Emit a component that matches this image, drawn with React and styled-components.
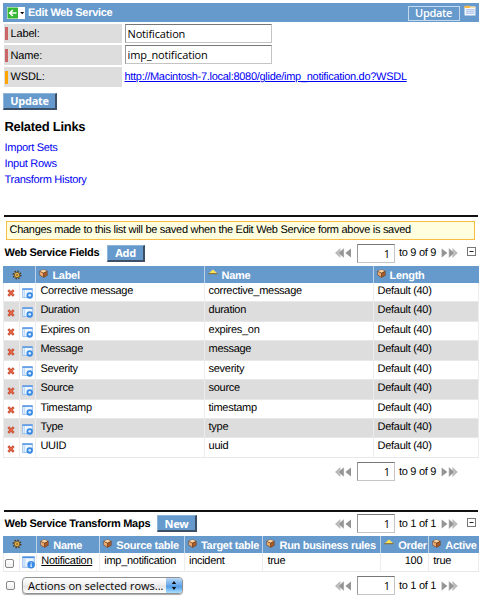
import React from 'react';
import styled, { createGlobalStyle } from 'styled-components';

const Global = createGlobalStyle`
  * { box-sizing: border-box; }
  body {
    margin: 0;
    background: #fff;
    color: #000;
    font: 11px/14px "Liberation Sans", Arial, sans-serif;
    letter-spacing: -0.29px;
    text-rendering: geometricPrecision;
  }
  #root { width: 483px; height: 599px; overflow: hidden; }
  svg { display: block; flex: none; }
`;

const lucida = '"Open Sans", "Noto Sans", sans-serif';

const Page = styled.main`
  width: 483px;
  height: 599px;
  padding: 3px 4px 0 3px;
  overflow: hidden;
  white-space: nowrap;
`;
const TitleBar = styled.header`
  display: flex;
  align-items: center;
  height: 19px;
  padding: 0 3.5px 0 4px;
  background: #6699cc;
  color: #fff;
`;
const Title = styled.h1`
  flex: 1;
  margin: 0 0 0 3px;
  padding-top: 1px;
  font-size: 11px;
`;
const BarButton = styled.button`
  width: 52px;
  height: 15px;
  margin: 1px 4px 0 0;
  padding: 0;
  border: 1px solid #c5d9ed;
  background: #6699cc;
  color: #fff;
  font: 600 11px/12px ${lucida};
  letter-spacing: -0.35px;
`;
const BarIcon = styled.span`
  align-self: flex-start;
  margin-top: 2px;
`;
const Form = styled.div`
  display: grid;
  grid-template-columns: 118px 1fr;
  grid-template-rows: repeat(3, 19.8px);
  gap: 2px 2.5px;
  margin: 1.5px 0 0 1px;
`;
const FieldLabel = styled.label`
  display: flex;
  align-items: center;
  gap: 3px;
  padding: 1px 0 0 1px;
  background: #ddd;
  letter-spacing: -0.15px;
  &::before { content: ""; width: 2.5px; height: 13px; background: ${p => p.$mark}; }
`;
const Field = styled.input`
  width: 147px;
  height: 19px;
  padding: 0 2px;
  border: 1px solid #c4c4c4;
  border-top: 1.5px solid #777;
  border-left-color: #999;
  border-radius: 0;
  background: #fff;
  color: #000;
  outline: 0;
  font: 11px/15px ${lucida};
  letter-spacing: -0.15px;
`;
const Url = styled.a`
  align-self: center;
  padding-top: 1px;
  color: #0000f4;
  text-decoration: underline;
`;
const Button = styled.button`
  width: ${p => p.$w}px;
  height: 17px;
  padding: 0;
  border: 1px solid #8db5dc;
  border-right: 2px solid #3d4f66;
  border-bottom: 2px solid #3d4f66;
  background: #6699cc;
  color: #fff;
  font: 700 11px/13px ${lucida};
  letter-spacing: -0.3px;
`;
const FormActions = styled.div`
  display: flex;
  height: 30.1px;
  padding-top: 6.1px;
`;
const Heading = styled.h2`
  height: 18.5px;
  margin: 0 0 0 1.5px;
  font-size: 13px;
  line-height: 19px;
`;
const Links = styled.nav`
  display: flex;
  flex-direction: column;
  height: 80px;
  padding: 4.5px 0 0 1.5px;
`;
const LinkItem = styled.a`
  height: 16px;
  line-height: 16px;
  color: #0000f4;
`;
const Rule = styled.hr`
  height: 2px;
  margin: 0 1px;
  border: 0;
  background: #111;
`;
const Notice = styled.div`
  height: 19px;
  margin: 3.5px 4px 0 3px;
  padding-left: 2.5px;
  border: 1.5px solid #f9bd43;
  background: #ffffdf;
  line-height: 17px;
`;
const SectionHead = styled.div`
  display: flex;
  align-items: center;
  height: ${p => p.$h}px;
  padding: 0 3px 0 1.5px;
`;
const SectionTitle = styled.h3`
  width: ${p => p.$w}px;
  margin: 0;
  font-size: 11px;
`;
const PagerBox = styled.div`
  display: flex;
  align-items: center;
  width: 123px;
  margin-left: auto;
  margin-right: ${p => p.$end}px;
`;
const PageInput = styled.input`
  width: 38px;
  height: 19px;
  margin: 0 4px 0 5px;
  padding: 0 4px 0 3px;
  border: 1px solid #c4c4c4;
  border-top: 1.5px solid #777;
  border-left-color: #999;
  border-radius: 0;
  text-align: right;
  font: 11px/15px ${lucida};
`;
const PageText = styled.span`
  width: 42px;
`;
const Collapse = styled.div`
  display: flex;
  align-self: flex-start;
  margin-top: ${p => p.$top}px;
`;
const Row = styled.div`
  display: grid;
  grid-template-columns: ${p => p.$cols};
  height: ${p => p.$h}px;
  background: ${p => (p.$shade ? '#ddd' : '#fff')};
`;
const HeadRow = styled(Row)`
  background: #6699cc;
  color: #fff;
  font-weight: 700;
`;
const HeadCell = styled.div`
  display: flex;
  align-items: flex-start;
  gap: 4px;
  padding: 3px 0 0 3px;
  border-left: 1px solid #bdd3ea;
`;
const GearCell = styled(HeadCell)`
  padding: 3.5px 0 0 8px;
  border-left-color: #6699cc;
`;
const HeadText = styled.span`
  line-height: 14px;
`;
const Cell = styled.div`
  padding: 1px ${p => (p.$right ? 6 : 0)}px 0 4px;
  border-left: 1px solid #ededed;
  border-bottom: 1px solid #e8e8e8;
  text-align: ${p => (p.$right ? 'right' : 'left')};
  line-height: 14px;
  &:last-child { border-right: 1px solid #ededed; }
`;
const IconCell = styled(Cell)`
  display: flex;
  align-items: flex-start;
  padding: ${p => p.$top}px 0 0 ${p => p.$left}px;
`;
const RecordLink = styled.a`
  text-decoration: underline;
`;
const ListFoot = styled.div`
  display: flex;
  align-items: center;
  height: ${p => p.$h}px;
  padding-left: 3px;
`;
const Check = styled.input`
  appearance: none;
  flex: none;
  width: 9px;
  height: 9px;
  margin: 0;
  border: 1px solid #888;
  border-radius: 2px;
  background: linear-gradient(#fff, #eee);
`;
const Picker = styled.button`
  display: flex;
  justify-content: space-between;
  align-items: stretch;
  width: 161px;
  height: 17px;
  margin-left: 7px;
  padding: 0 0 0 5px;
  border: 1px solid #909090;
  border-radius: 4px;
  overflow: hidden;
  background: linear-gradient(#fff, #eee 48%, #e2e2e2 52%, #fff);
  box-shadow: 0 1px 1px #aaa;
  font: 11px/15px ${lucida};
  letter-spacing: 0;
  color: #000;
`;
const Stepper = styled.span`
  display: flex;
  align-items: center;
  justify-content: center;
  width: 16px;
  background: linear-gradient(#b9d8f8, #65a6ea 50%, #4b96e6 52%, #a8e0ff);
`;

const BackIcon = () => (
  <svg width="18" height="12" viewBox="0 0 18 12">
    <rect width="18" height="12" fill="#fff" />
    <rect x=".5" y=".5" width="10.5" height="11" fill="#35b735" />
    <path d="M9.5 6H3M5.8 3L2.8 6l3 3" fill="none" stroke="#fff" strokeWidth="1.7" />
    <path d="M13.2 5h4l-2 2.2z" fill="#000" />
  </svg>
);
const TabIcon = () => (
  <svg width="12" height="11" viewBox="0 0 12 11">
    <rect x=".5" y="1.5" width="11" height="9" rx=".5" fill="#f4f8ff" />
    <path d="M.5 3V.8h5.8V3z" fill="#ffbb43" />
    <path d="M6.5 2.2h5" stroke="#ffd37d" />
    <rect x="2" y="4" width="8.5" height="5" fill="#b9cdee" />
    <path d="M2 5.5h8M2 7.5h8" stroke="#dce7fa" strokeWidth=".7" />
  </svg>
);
const GearIcon = () => (
  <svg width="10" height="10" viewBox="0 0 10 10">
    <circle cx="5" cy="5" r="3.8" fill="none" stroke="#4c3b20" strokeWidth="1.4" strokeDasharray="1.5 1.48" />
    <circle cx="5" cy="5" r="2.7" fill="#e5b44a" stroke="#72521e" strokeWidth=".9" />
    <circle cx="5" cy="5" r="1" fill="#8a6a33" />
  </svg>
);
const CubeIcon = () => (
  <svg width="9" height="9" viewBox="0 0 9 9">
    <path d="M.5 2L4.6.4 8.5 2v4.4L4.5 8.7.6 6.3z" fill="#6e3a18" />
    <path d="M.9 2.1L4.6.8l3.3 1.3-3.5 1.6z" fill="#ffd5a2" />
    <path d="M.9 2.7l3.3 1.6v3.6L1 6z" fill="#e8a870" />
    <path d="M4.9 4.3L8 2.8v3.4L4.9 8z" fill="#a65b2b" />
  </svg>
);
const SortIcon = () => (
  <svg width="10" height="6" viewBox="0 0 10 6">
    <path d="M.6 4.4L5 .4l4.4 4z" fill="#ffe45a" />
    <path d="M.3 4.7h9.4" stroke="#8b6b29" />
  </svg>
);
const DeleteIcon = () => (
  <svg width="8" height="8" viewBox="0 0 8 8">
    <path d="M1.3 1.2l5.4 5.6M6.7 1.2L1.3 6.8" stroke="#b9462c" strokeWidth="2.5" />
    <path d="M1.5 1.4l5 5.2M6.5 1.4l-5 5.2" stroke="#e66849" strokeWidth="1.4" />
  </svg>
);
const DetailIcon = ({ size = 11, info }) => (
  <svg width={size} height={size} viewBox="0 0 10 10">
    <path d="M.6.8h8.8v6H7v1.8H.6z" fill="#eef6ff" stroke="#8db9ed" strokeWidth=".8" />
    <path d="M.3 1h9.4" stroke="#4d91e4" strokeWidth="1.3" />
    <path d="M2.2 2v6" stroke="#b4d3f5" strokeWidth=".8" />
    <circle cx="7" cy="6.8" r="2.9" fill="#398ae4" />
    {info
      ? <path d="M7 5v.8M7 6.3v2.2" stroke="#fff" strokeWidth=".9" />
      : <circle cx="7" cy="6.7" r="1.2" fill="#d5eaff" />}
  </svg>
);
const PrevIcons = () => (
  <svg width="17" height="10" viewBox="0 0 17 10">
    <path d="M5.4 0v10L0 5z" fill="#b9b9b9" />
    <path d="M9 0v10L3.2 5z" fill="#949494" stroke="#eee" strokeWidth=".5" />
    <path d="M16 .5v9L10.4 5z" fill="#949494" />
  </svg>
);
const NextIcons = () => (
  <svg width="17" height="10" viewBox="0 0 17 10">
    <path d="M.6.5v9L6.4 5z" fill="#949494" />
    <path d="M11.4 0v10L16.8 5z" fill="#b9b9b9" />
    <path d="M7.8 0v10l5.8-5z" fill="#949494" stroke="#eee" strokeWidth=".5" />
  </svg>
);
const CollapseIcon = () => (
  <svg width="9" height="9" viewBox="0 0 9 9">
    <rect x=".5" y=".5" width="8" height="8" fill="#fff" stroke="#777" />
    <path d="M2.5 4.5h4" stroke="#222" />
  </svg>
);
const StepIcon = () => (
  <svg width="6" height="11" viewBox="0 0 6 11">
    <path d="M.8 4L3 1l2.2 3zM.8 7L3 10l2.2-3z" fill="#111" />
  </svg>
);

const Pager = ({ total, end }) => (
  <PagerBox $end={end}>
    <PrevIcons />
    <PageInput readOnly value="1" />
    <PageText>{`to ${total} of ${total}`}</PageText>
    <NextIcons />
  </PagerBox>
);

const fieldCols = '16px 16.4px 168.2px 169px 106.4px';
const mapCols = '16px 17.3px 63px 84.7px 78.5px 117.8px 48px 50.7px';
const fields = [
  ['Corrective message', 'corrective_message'],
  ['Duration', 'duration'],
  ['Expires on', 'expires_on'],
  ['Message', 'message'],
  ['Severity', 'severity'],
  ['Source', 'source'],
  ['Timestamp', 'timestamp'],
  ['Type', 'type'],
  ['UUID', 'uuid'],
];

export default function App() {
  return (
    <Page>
      <Global />
      <TitleBar>
        <BackIcon />
        <Title>Edit Web Service</Title>
        <BarButton>Update</BarButton>
        <BarIcon><TabIcon /></BarIcon>
      </TitleBar>
      <Form>
        <FieldLabel $mark="#cc6666">Label:</FieldLabel>
        <Field readOnly value="Notification" />
        <FieldLabel $mark="#cc6666">Name:</FieldLabel>
        <Field readOnly value="imp_notification" />
        <FieldLabel $mark="#ffa500">WSDL:</FieldLabel>
        <Url>http://Macintosh-7.local:8080/glide/imp_notification.do?WSDL</Url>
      </Form>
      <FormActions><Button $w={54}>Update</Button></FormActions>
      <Heading>Related Links</Heading>
      <Links>
        <LinkItem>Import Sets</LinkItem>
        <LinkItem>Input Rows</LinkItem>
        <LinkItem>Transform History</LinkItem>
      </Links>
      <Rule />
      <Notice>Changes made to this list will be saved when the Edit Web Service form above is saved</Notice>
      <SectionHead $h={26.4}>
        <SectionTitle $w={102.5}>Web Service Fields</SectionTitle>
        <Button $w={38}>Add</Button>
        <Pager total={9} end={9} />
        <Collapse $top={7}><CollapseIcon /></Collapse>
      </SectionHead>
      <HeadRow $cols="32.4px 168.2px 169px 106.4px" $h={16.6}>
        <GearCell><GearIcon /></GearCell>
        <HeadCell><CubeIcon /><HeadText>Label</HeadText></HeadCell>
        <HeadCell><SortIcon /><HeadText>Name</HeadText></HeadCell>
        <HeadCell><CubeIcon /><HeadText>Length</HeadText></HeadCell>
      </HeadRow>
      {fields.map(([label, name], i) => (
        <Row key={name} $cols={fieldCols} $h={19.45} $shade={i % 2 === 1}>
          <IconCell $top={6.5} $left={3}><DeleteIcon /></IconCell>
          <IconCell $top={5} $left={2}><DetailIcon /></IconCell>
          <Cell>{label}</Cell>
          <Cell>{name}</Cell>
          <Cell>Default (40)</Cell>
        </Row>
      ))}
      <ListFoot $h={28}><Pager total={9} end={21} /></ListFoot>
      <SectionHead $h={24} />
      <Rule />
      <SectionHead $h={24}>
        <SectionTitle $w={152.5}>Web Service Transform Maps</SectionTitle>
        <Button $w={40}>New</Button>
        <Pager total={1} end={9} />
        <Collapse $top={6}><CollapseIcon /></Collapse>
      </SectionHead>
      <HeadRow $cols="33.3px 63px 84.7px 78.5px 117.8px 48px 50.7px" $h={16.6}>
        <GearCell><GearIcon /></GearCell>
        <HeadCell><CubeIcon /><HeadText>Name</HeadText></HeadCell>
        <HeadCell><CubeIcon /><HeadText>Source table</HeadText></HeadCell>
        <HeadCell><CubeIcon /><HeadText>Target table</HeadText></HeadCell>
        <HeadCell><CubeIcon /><HeadText>Run business rules</HeadText></HeadCell>
        <HeadCell><SortIcon /><HeadText>Order</HeadText></HeadCell>
        <HeadCell><CubeIcon /><HeadText>Active</HeadText></HeadCell>
      </HeadRow>
      <Row $cols={mapCols} $h={19.7}>
        <IconCell $top={6} $left={1}><Check type="checkbox" /></IconCell>
        <IconCell $top={3} $left={2}><DetailIcon size={13} info /></IconCell>
        <Cell><RecordLink>Notification</RecordLink></Cell>
        <Cell>imp_notification</Cell>
        <Cell>incident</Cell>
        <Cell>true</Cell>
        <Cell $right>100</Cell>
        <Cell>true</Cell>
      </Row>
      <ListFoot $h={27}>
        <Check type="checkbox" />
        <Picker>Actions on selected rows...<Stepper><StepIcon /></Stepper></Picker>
        <Pager total={1} end={21} />
      </ListFoot>
    </Page>
  );
}
